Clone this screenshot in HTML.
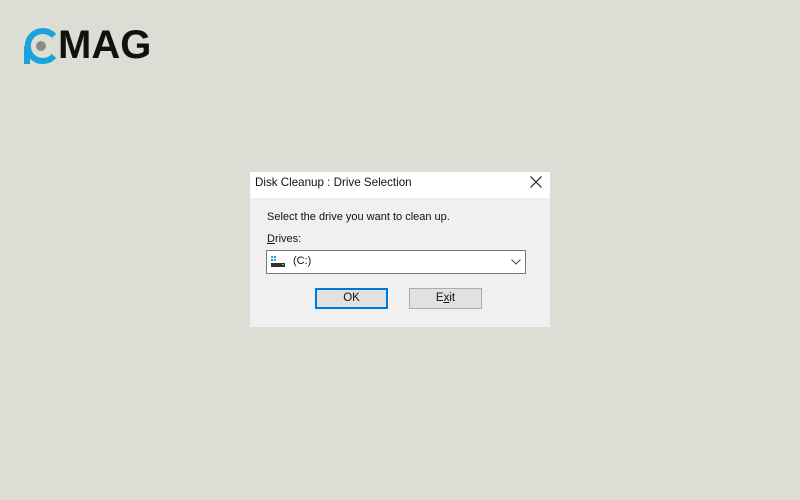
<!DOCTYPE html>
<html><head><style>
html,body{margin:0;padding:0}
body{width:800px;height:500px;background:#dcded5;position:relative;overflow:hidden;font-family:"Liberation Sans",sans-serif}
.logo{position:absolute;left:22px;top:27px}
.mag{position:absolute;left:58px;top:25px;font-size:40px;font-weight:bold;color:#111;line-height:40px}
.dlg{position:absolute;left:250px;top:172px;width:300px;height:155px;background:#f0f0f0}
.tb{height:26px;background:#fff;font-size:11.6px;color:#111;line-height:22px;padding-left:5px;position:relative}
.x{position:absolute;right:7px;top:3px}
.t{position:absolute;font-size:11px;color:#111}
.combo{position:absolute;left:16px;top:78px;width:258px;height:22px;background:#fff;border:1px solid #7a7a7a}
.btn{position:absolute;top:116px;width:71px;height:19px;background:#e1e1e1;border:1px solid #adadad;font-size:11.5px;text-align:center;line-height:19px;color:#111}
.ok{left:65px;border:1px solid #0078d7;box-shadow:inset 0 0 0 1px #0078d7}
</style></head><body>
<svg class="logo" width="36" height="38" viewBox="0 0 36 38">
<path d="M32 9 A15 15 0 1 0 32 29" fill="none" stroke="#1aa3dc" stroke-width="6"/>
<rect x="2" y="19" width="6" height="18" fill="#1aa3dc"/>
<circle cx="19" cy="19" r="5" fill="#8a8a8a"/>
</svg>
<div class="mag">MAG</div>
<div class="dlg">
<div class="tb">Disk Cleanup : Drive Selection
<svg class="x" width="14" height="14" viewBox="0 0 14 14"><path d="M1.5 1.5L12.5 12.5M12.5 1.5L1.5 12.5" stroke="#222" stroke-width="1.2"/></svg></div>
<div class="t" style="left:17px;top:39px">Select the drive you want to clean up.</div>
<div class="t" style="left:17px;top:61px"><u>D</u>rives:</div>
<div class="combo">
<svg style="position:absolute;left:3px;top:5px" width="16" height="12"><rect x="1" y="0" width="2" height="2" fill="#1aa3dc"/><rect x="4" y="0" width="2" height="2" fill="#1aa3dc"/><rect x="1" y="3" width="2" height="2" fill="#1aa3dc"/><rect x="4" y="3" width="2" height="2" fill="#1aa3dc"/><rect x="1" y="7" width="14" height="4" fill="#333"/><rect x="12" y="8" width="2" height="1" fill="#6c6"/></svg>
<span class="t" style="left:26px;top:4px">(C:)</span>
<svg style="position:absolute;right:4px;top:8px" width="10" height="6"><path d="M0.5 0.5L5 5L9.5 0.5" fill="none" stroke="#444"/></svg>
</div>
<div class="btn ok">OK</div>
<div class="btn" style="left:159px">E<u>x</u>it</div>
</div>
</body></html>
